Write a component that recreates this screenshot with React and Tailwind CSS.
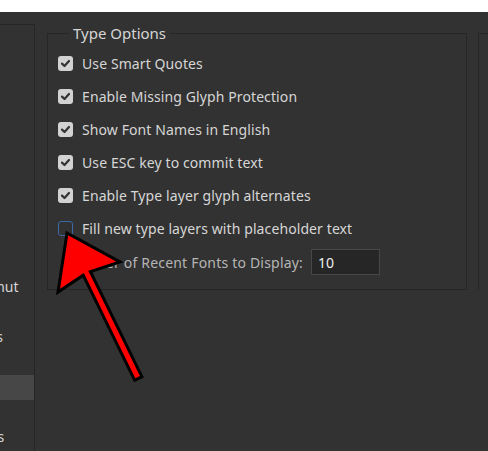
import React from 'react';

const sidebarItems = [
  'General',
  'Interface',
  'Workspace',
  'Tools',
  'History Log',
  'File Handling',
  'Export',
  'Performance',
  'Scratch Disks',
  'Cursors',
  'Transparency & Gamut',
  'Units & Rulers',
  'Guides, Grid & Slices',
  'Plug-ins',
  'Type',
  '3D',
  'Technology Previews',
];

const options = [
  { label: 'Use Smart Quotes', checked: true },
  { label: 'Enable Missing Glyph Protection', checked: true },
  { label: 'Show Font Names in English', checked: true },
  { label: 'Use ESC key to commit text', checked: true },
  { label: 'Enable Type layer glyph alternates', checked: true },
  { label: 'Fill new type layers with placeholder text', checked: false },
];

const Checkbox = ({ checked }) =>
  checked ? (
    <span className="w-[15px] h-[15px] rounded-[3px] bg-[#d2d2d2] flex items-center justify-center shrink-0">
      <svg width="11" height="11" viewBox="0 0 11 11">
        <path d="M2 5.6 L4.5 8 L9 3" fill="none" stroke="#333" strokeWidth="2.2" strokeLinecap="round" strokeLinejoin="round" />
      </svg>
    </span>
  ) : (
    <span className="w-[15px] h-[15px] rounded-[3px] border-[1.5px] border-[#3f68a6] shrink-0" />
  );

const Arrow = () => (
  <svg className="absolute inset-0 pointer-events-none" width="488" height="451" viewBox="0 0 488 451">
    <polygon
      points="67,233 120,262 90.4,271.6 141.9,376.7 134.7,380.3 83.2,275.2 58,292"
      fill="#ff0000"
      stroke="#000"
      strokeWidth="3"
      strokeLinejoin="miter"
    />
  </svg>
);

export default function App() {
  return (
    <div
      className="relative w-[488px] h-[451px] bg-white flex flex-col overflow-hidden text-[14px] text-[#d6d6d6]"
      style={{ fontFamily: '"Noto Sans", "Open Sans", sans-serif' }}
    >
      <div className="h-3 shrink-0" />
      <div className="flex-1 bg-[#323232] flex">
        {/* Sidebar (clipped) */}
        <div className="w-[35px] shrink-0 mt-3 border-t border-r border-[#262626] overflow-hidden">
          {sidebarItems.map((item) => (
            <div
              key={item}
              className={`h-[25px] flex items-center whitespace-nowrap ${item === 'Type' ? 'bg-[#474747]' : ''}`}
            >
              <span className="ml-[-132px] pb-[2px]">{item}</span>
            </div>
          ))}
        </div>

        {/* Content */}
        <div className="flex-1 flex pl-3 pt-[11px] gap-[11px] min-w-0">
          <fieldset className="w-[420px] h-[267px] shrink-0 border border-[#262626] pl-[10px] pr-3 pt-1">
            <legend className="ml-[11px] px-[4px] leading-[20px] text-[15px] text-[#d6d6d6]">Type Options</legend>
            {options.map((o) => (
              <div key={o.label} className="h-[33px] flex items-center gap-[9px]">
                <Checkbox checked={o.checked} />
                <span className="tracking-[0.1px]">{o.label}</span>
              </div>
            ))}
            <div className="h-[34px] flex items-center pl-[6px]">
              <span className="text-[#b5b5b5] tracking-[0.2px]">Number of Recent Fonts to Display:</span>
              <div className="ml-2 w-[69px] h-[26px] bg-[#262626] border border-[#474747] flex items-center pl-[6px] text-[#f0f0f0]">
                10
              </div>
            </div>
          </fieldset>
          <div className="flex-1 mt-[10px] h-[257px] border-l border-t border-[#262626]" />
        </div>
      </div>
      <Arrow />
    </div>
  );
}
